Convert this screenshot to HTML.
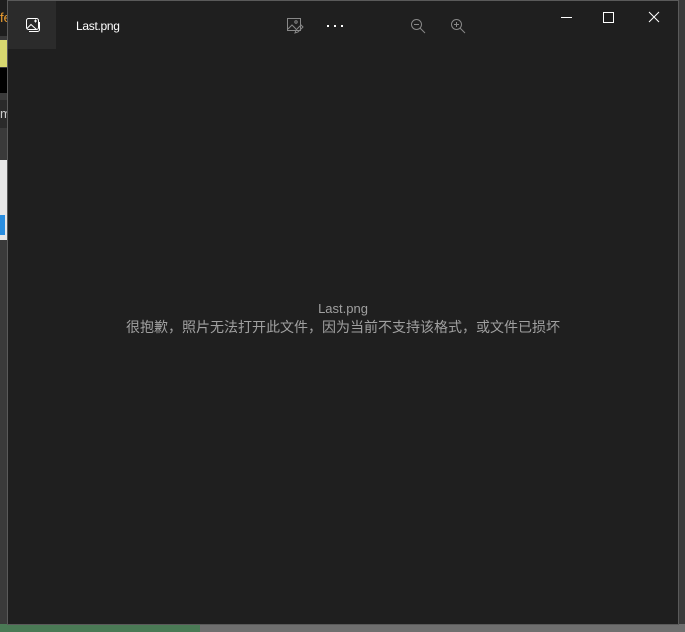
<!DOCTYPE html>
<html><head><meta charset="utf-8"><style>
body{margin:0;width:685px;height:632px;background:#3a3a3a;position:relative;overflow:hidden;font-family:"Liberation Sans","Noto Sans CJK SC",sans-serif}
.bg{position:absolute}
#win{position:absolute;left:7px;top:0;width:670px;height:623px;background:#1f1f1f;border:1px solid #5a5a5a}
.t{position:absolute;color:#fff;font-size:12px}
</style></head><body>
<div class="bg" style="left:0;top:0;width:7px;height:36px;background:#1e1e1e"></div>
<div class="bg" style="left:0;top:10px;width:7px;height:14px;color:#f0a030;font-size:13px">fe</div>
<div class="bg" style="left:0;top:40px;width:7px;height:27px;background:#d8d870"></div>
<div class="bg" style="left:0;top:68px;width:7px;height:25px;background:#000"></div>
<div class="bg" style="left:0;top:100px;width:7px;height:28px;background:#2a2a2a;color:#ccc;font-size:13px;line-height:28px">m</div>
<div class="bg" style="left:0;top:160px;width:7px;height:80px;background:#e8e8e8"></div>
<div class="bg" style="left:0;top:215px;width:5px;height:20px;background:#2a8ee0"></div>
<div class="bg" style="left:0;top:624px;width:685px;height:8px;background:#6f6f6f"></div>
<div class="bg" style="left:0;top:624px;width:200px;height:8px;background:#4a7a55"></div>
<div class="bg" style="left:678px;top:0;width:7px;height:624px;background:#3b3b3b"></div>
<div id="win">
 <div style="position:absolute;left:0;top:0;width:48px;height:48px;background:#2b2b2b"></div>
 <svg style="position:absolute;left:17px;top:16px" width="16" height="16" viewBox="0 0 16 16" fill="none" stroke="#fff" stroke-width="1"><rect x="1.5" y="1.5" width="12" height="11" rx="2"/><path d="M2 11.5l4-4 5.5 5"/><path d="M10.5 2.5v3M9 4h3"/><path d="M4 14.5h8.5a2 2 0 0 0 2-2V5"/></svg>
 <div class="t" style="left:68px;top:18px;font-size:12px;letter-spacing:-0.3px">Last.png</div>
 <svg style="position:absolute;left:278px;top:16px" width="18" height="18" viewBox="0 0 18 18" fill="none" stroke="#888" stroke-width="1"><rect x="1.5" y="1.5" width="13" height="12"/><path d="M2 12l4-4 4 4"/><circle cx="10" cy="5" r="1.2"/><path d="M9 16l1-3 5-5 2 2-5 5z"/></svg>
 <div style="position:absolute;left:319px;top:24px;width:2px;height:2px;background:#fff;box-shadow:7px 0 #fff,14px 0 #fff"></div>
 <svg style="position:absolute;left:402px;top:17px" width="16" height="16" viewBox="0 0 16 16" fill="none" stroke="#888" stroke-width="1"><circle cx="6.5" cy="6.5" r="5"/><path d="M10 10l5 5M4 6.5h5"/></svg>
 <svg style="position:absolute;left:442px;top:17px" width="16" height="16" viewBox="0 0 16 16" fill="none" stroke="#888" stroke-width="1"><circle cx="6.5" cy="6.5" r="5"/><path d="M10 10l5 5M4 6.5h5M6.5 4v5"/></svg>
 <div style="position:absolute;left:553px;top:16px;width:11px;height:1px;background:#fff"></div>
 <div style="position:absolute;left:595px;top:11px;width:9px;height:9px;border:1px solid #fff"></div>
 <svg style="position:absolute;left:640px;top:10px" width="12" height="12" viewBox="0 0 12 12" stroke="#fff" stroke-width="1"><path d="M1 1l10 10M11 1L1 11"/></svg>
 <div style="position:absolute;left:0;width:670px;top:299px;text-align:center;color:#a0a0a0;font-size:13px;line-height:18px">Last.png<br><span style="font-size:14px;letter-spacing:0">很抱歉，照片无法打开此文件，因为当前不支持该格式，或文件已损坏</span></div>
</div>
</body></html>
